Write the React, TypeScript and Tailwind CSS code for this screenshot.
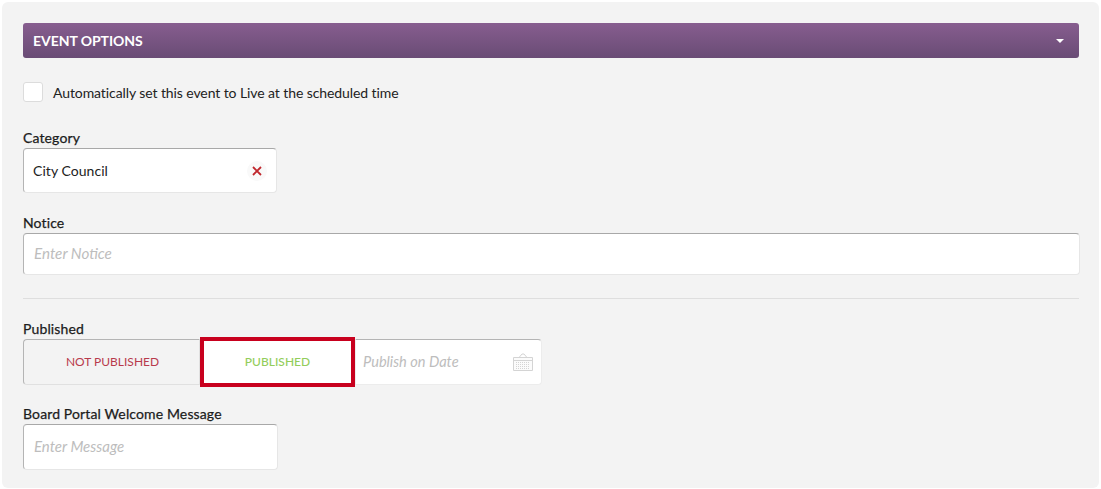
import React from 'react';

const inputShadow = 'border border-[#e6e6e6] border-t-[#a8a8a8] border-l-[#b4b4b4] rounded-[4px] bg-white';
const labelCls = 'block h-[20px] leading-[20px] text-[14px] text-[#1c1c1c] tracking-[0.13px] [-webkit-text-stroke:0.25px_#1c1c1c]';

const CalendarIcon = () => (
  <svg width="20" height="20" viewBox="0 0 20 20" fill="none" stroke="#d4d4d4" strokeWidth="1">
    <path d="M0.5 5.5h19v13h-19z" fill="#fbfbfb" />
    <path d="M6 5.5l3-3.5h2l3 3.5" />
    <path d="M0.5 8.5h19" />
    <path d="M3 10.5h14M3 12.5h14M3 14.5h14M3 16.5h14" strokeDasharray="1 1" />
  </svg>
);

export default function App() {
  return (
    <div className="h-[489px] bg-white pt-[2px] pl-[2px] pr-[2px] font-['Lato','Open_Sans',sans-serif] text-[14px] text-[#222]">
      <div className="h-[486px] bg-[#f3f3f3] rounded-[6px] pt-[21px] pl-[21px] pr-[19px]">
        {/* Section header */}
        <div className="h-[35px] mr-[1px] rounded-[3px] bg-gradient-to-b from-[#875d8f] to-[#694c75] flex items-center justify-between px-[10px] text-white">
          <span className="font-bold text-[14px] tracking-[-0.05px]">EVENT OPTIONS</span>
          <span className="mr-[5px] w-0 h-0 border-x-[4px] border-x-transparent border-t-[4px] border-t-white"></span>
        </div>

        <div className="flex items-center mt-[24px] h-[20px]">
          <div className="w-[20px] h-[20px] bg-white rounded-[3px] border border-[#dcdcdc]"></div>
          <span className="ml-[10px] tracking-[-0.09px]">Automatically set this event to Live at the scheduled time</span>
        </div>

        {/* Category */}
        <label className={`${labelCls} mt-[26px]`}>Category</label>
        <div className={`${inputShadow} w-[254px] h-[45px] flex items-center justify-between pl-[9px] pr-[9px]`}>
          <span className="pb-[1px] tracking-[0.05px]">City Council</span>
          <span className="w-[20px] h-[20px] rounded-full bg-[#f9f9f9] flex items-center justify-center">
            <svg width="10" height="10" viewBox="0 0 10 10" stroke="#c0272d" strokeWidth="1.8">
              <path d="M1 1l8 8M9 1l-8 8" />
            </svg>
          </span>
        </div>

        {/* Notice */}
        <label className={`${labelCls} mt-[20px]`}>Notice</label>
        <div className={`${inputShadow} h-[42px] flex items-center pl-[10px] pb-[2px] italic text-[15.2px] text-[#bdbdbd]`}>Enter Notice</div>

        <div className="mt-[23px] mr-[1px] border-t border-[#dedede]"></div>

        {/* Published */}
        <label className={`${labelCls} mt-[20px]`}>Published</label>
        <div className="flex w-[519px] h-[46px] relative">
          <div className="w-[177px] pl-[2px] border border-[#e0e0e0] border-t-[#b4b4b4] border-l-[#b4b4b4] rounded-l-[4px] bg-[#f3f3f3] flex items-center justify-center text-[12px] text-[#b83a4c]">
            NOT PUBLISHED
          </div>
          <div className="absolute left-[177px] -top-[2px] w-[155px] h-[50px] border-[4px] border-[#c8001e] bg-white flex items-center justify-center text-[12px] font-medium text-[#93cd5b]">
            PUBLISHED
          </div>
          <div className="flex-1 ml-[155px] bg-white border border-[#ececec] border-t-[#b4b4b4] rounded-r-[4px] flex items-center justify-between pl-[7px] pr-[8px] italic text-[14.6px] text-[#bdbdbd]">
            <span>Publish on Date</span>
            <CalendarIcon />
          </div>
        </div>

        {/* Welcome message */}
        <label className={`${labelCls} mt-[19px]`}>Board Portal Welcome Message</label>
        <div className={`${inputShadow} w-[255px] h-[46px] flex items-center pl-[10px] pb-[2px] italic text-[15px] text-[#bdbdbd]`}>Enter Message</div>
      </div>
    </div>
  );
}
